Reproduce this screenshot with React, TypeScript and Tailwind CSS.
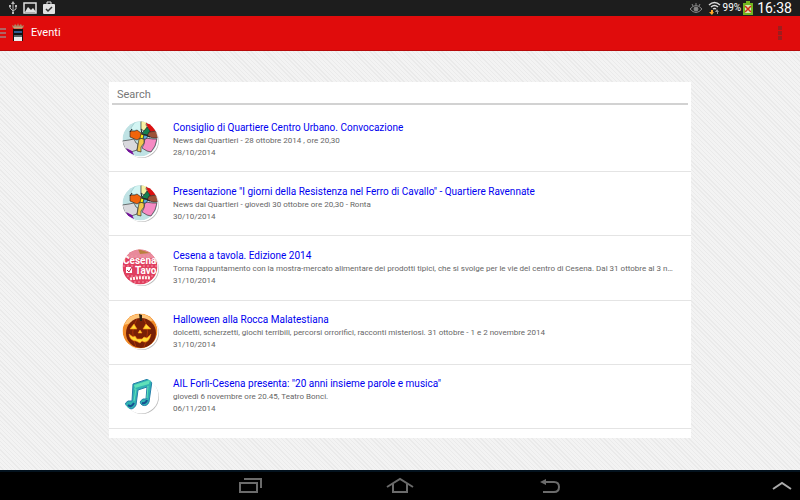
const events = [
  {
    icon: "map",
    title: "Consiglio di Quartiere Centro Urbano. Convocazione",
    description: "News dai Quartieri - 28 ottobre 2014 , ore 20,30",
    date: "28/10/2014",
  },
  {
    icon: "map",
    title: 'Presentazione "I giorni della Resistenza nel Ferro di Cavallo" - Quartiere Ravennate',
    description: "News dai Quartieri - giovedì 30 ottobre ore 20,30 - Ronta",
    date: "30/10/2014",
  },
  {
    icon: "food",
    title: "Cesena a tavola. Edizione 2014",
    description:
      "Torna l'appuntamento con la mostra-mercato alimentare dei prodotti tipici, che si svolge per le vie del centro di Cesena. Dal 31 ottobre al 3 novembre",
    date: "31/10/2014",
  },
  {
    icon: "pumpkin",
    title: "Halloween alla Rocca Malatestiana",
    description:
      "dolcetti, scherzetti, giochi terribili, percorsi orrorifici, racconti misteriosi. 31 ottobre - 1 e 2 novembre 2014",
    date: "31/10/2014",
  },
  {
    icon: "music",
    title: 'AIL Forlì-Cesena presenta: "20 anni insieme parole e musica"',
    description: "giovedì 6 novembre ore 20.45, Teatro Bonci.",
    date: "06/11/2014",
  },
];

const MapArt = () => (
  <g stroke="#222" strokeWidth=".6" strokeLinejoin="round">
    <circle cx="18" cy="18" r="17.5" fill="#bfe2e4" stroke="none" />
    <path d="M9 7 13 1 19 0 19 8 20 11 17 11 14 9 11 10Z" fill="#d3f5f3" stroke="#8fc4c4" />
    <path d="M19 0 25 0 24 4 26 7 22 10 19 8Z" fill="#f8f2a4" />
    <path d="M24 2 31 4 35 10 28 11 26 7Z" fill="#dc1111" stroke="none" />
    <path d="M22 10 25 6 28 10 27 14 23 14 20 12Z" fill="#168050" />
    <path d="M8 10 13 10 15 9 19 12 20 16 15 19 8 16Z" fill="#f0640c" />
    <path d="M27 11 35 10 36 17 31 17 25 15Z" fill="#9c5237" />
    <path d="M0 20 7 19 12 18 14 22 16 23 15 29 9 31 3 28Z" fill="#d9d9dd" />
    <path d="M23 17 31 18 35 18 33 25 29 31 25 30 20 27 22 23Z" fill="#f58bc4" />
    <path d="M17 18 22 17 22 22 19 26 19 31 15 30 16 24Z" fill="#f1c74c" />
    <path d="M19 13 22 14 21 18 18 17Z" fill="#f7ed12" />
    <path d="M22 14 26 15 24 18 21 18Z" fill="#5aaee0" />
    <path d="M4 27 10 30 12 34 6 31Z" fill="#76119b" stroke="none" />
    <path d="M10 8 8 11M19 8 20 13 24 14 28 16" fill="none" strokeWidth="1" />
  </g>
);

const FoodArt = () => (
  <g>
    <circle cx="18" cy="18" r="17.5" fill="#e0405f" />
    <path d="M6 3Q18-4 30 4L33 9 3 9Z" fill="#e88a9b" />
    <path d="M16 0 28 4 18 5Z" fill="#b9803f" />
    <path d="M1 7H35M1 17H35M1 27H35M8 33H29" stroke="#f391a5" strokeWidth="1" strokeDasharray="2 2" />
    <text x="1" y="15" fill="#fff" fontSize="10" fontWeight="700">Cesena</text>
    <text x="13" y="25" fill="#fff" fontSize="10" fontWeight="700">Tavo</text>
    <path d="M4 18h6v6H4z" fill="#fff" />
    <path d="m5 21 2 2 3-5" fill="none" stroke="#b5294b" />
    <path d="M8 30Q18 28 28 29" stroke="#fff3ed" strokeWidth="3" strokeDasharray="2 1" fill="none" />
  </g>
);

const PumpkinArt = () => (
  <g>
    <circle cx="18" cy="18" r="17.5" fill="#f18b28" />
    <path d="M2 12Q7 1 18 1 27 1 31 8L20 7Z" fill="#ffc477" />
    <ellipse cx="19" cy="20" rx="15" ry="15" fill="#782006" />
    <path d="M15 6Q7 18 14 34M22 6Q29 18 22 34" stroke="#a83508" strokeWidth="1" fill="none" />
    <path d="M18 8 17 1 20 2 20 8Z" fill="#2b2011" />
    <g fill="#ffdb36" stroke="#ff8a13" strokeWidth=".6">
      <path d="M12 11 15 16 8 16Z" />
      <path d="M24 11 29 16 21 16Z" />
      <path d="M18 17 20 20 16 20Z" />
      <path d="M7 21 11 24 13 23 15 26 20 26 22 24 25 25 29 21Q27 30 22 29L20 28 18 30 14 28Q8 28 7 21Z" />
    </g>
  </g>
);

const MusicArt = () => (
  <g>
    <circle cx="18" cy="18" r="17.5" fill="#fff" />
    <path
      d="M11 7 29 1 30 4 27 25Q25 30 20 28 16 25 21 22L24 22 25 10 16 13 14 28Q11 34 5 31 1 27 6 24L10 24Z"
      fill="#30b3b2"
      stroke="#267eaa"
      strokeWidth="1"
      strokeLinejoin="round"
    />
    <path d="M12 8 28 3 27 7 13 11Z" fill="#60e0b9" />
    <path d="M12 12 14 12 12 24M26 9 25 21" stroke="#60e0b9" fill="none" />
    <path d="M6 28q3 3 6-2M20 26q4 1 5-3" stroke="#174f92" strokeWidth="2" fill="none" />
  </g>
);

const EventIcon = ({ name }: { name: string }) => (
  <svg viewBox="0 0 38 38" className="size-[38px] shrink-0" aria-hidden="true">
    <defs>
      <clipPath id="disc">
        <circle cx="18" cy="18" r="17.5" />
      </clipPath>
    </defs>
    <circle cx="20" cy="20" r="17" fill="#bbb" />
    <circle cx="19" cy="19" r="17.5" fill="#fff" />
    <g clipPath="url(#disc)">
      {name === "map" && <MapArt />}
      {name === "food" && <FoodArt />}
      {name === "pumpkin" && <PumpkinArt />}
      {name === "music" && <MusicArt />}
    </g>
  </svg>
);

const StatusBar = () => (
  <div className="flex h-4 items-center justify-between bg-[#1d1d1d] px-2 text-white">
    <div className="flex items-center gap-1">
      <svg viewBox="0 0 10 14" className="h-[14px] w-[10px]" fill="none" stroke="#bbb">
        <path d="M5 2v10M2 5v2l3 3 3-2V5" />
        <path d="M5 0 7 3H3ZM4 11h2v2H4ZM1 4h2v2H1ZM7 4h2v2H7Z" fill="#bbb" stroke="none" />
      </svg>
      <svg viewBox="0 0 16 14" className="h-[14px] w-4">
        <path d="M2 2h12v10H2Z" fill="#222" stroke="#e2e2e2" strokeWidth="1.5" />
        <path d="m3 11 3-5 3 3 2-2 3 4Z" fill="#e2e2e2" />
      </svg>
      <svg viewBox="0 0 14 14" className="h-[14px] w-[14px]">
        <path d="M5 3V1h4v2" fill="none" stroke="#e2e2e2" />
        <rect x="1" y="3" width="12" height="10" rx="1" fill="#e2e2e2" />
        <path d="m4 8 2 2 4-4" fill="none" stroke="#333" strokeWidth="1.5" />
      </svg>
    </div>
    <div className="flex items-center">
      <svg viewBox="0 0 14 12" className="mr-[5px] h-3 w-[14px]" fill="none" stroke="#888">
        <path d="M1 7q6-7 12 0-6 7-12 0M3 2l1 2M7 1v2M11 2l-1 2" />
        <circle cx="7" cy="7" r="2" fill="#888" />
      </svg>
      <svg viewBox="0 0 13 14" className="mr-[2px] h-[14px] w-[13px]" fill="none" stroke="#ddd">
        <path d="M1 4q5.5-5 11 0M3 6q3.5-3 7 0M5 8q1.5-1 3 0" strokeWidth="1.5" />
        <path d="M3 9v2H1l3 3 2-3H5V9Z" fill="#ffa729" stroke="none" />
        <path d="M9 13v-2H7l2-3 2 3h-1v2Z" fill="#999" stroke="none" />
      </svg>
      <span className="text-[10px] leading-4">99%</span>
      <svg viewBox="0 0 10 14" className="mr-[4px] ml-[2px] h-[14px] w-[10px]">
        <path d="M0 2h3V0h4v2h3v12H0Z" fill="#72b620" />
        <path d="M2 4h6v8H2Z" fill="#d9e4b0" />
        <path d="m2 5 6 6M8 5l-6 6" stroke="#d42e16" strokeWidth="1.5" />
      </svg>
      <span className="text-[14px] leading-4">16:38</span>
    </div>
  </div>
);

const Header = () => (
  <header className="flex h-[35px] items-center border-b border-[#b70a0a] bg-[#e00c0c] pr-[14px] text-white">
    <button aria-label="Menu" className="flex items-center">
      <svg viewBox="0 0 7 12" className="h-3 w-[7px]" stroke="#b06464" strokeWidth="2">
        <path d="M0 2h6M0 6h6M0 10h6" />
      </svg>
      <svg viewBox="0 0 14 20" className="ml-1 h-5 w-[14px]">
        <path d="M2 5 1 2l2 1 1-2 2 2 1-3 1 3 2-2 1 2 2-1-1 3Z" fill="#ae8664" />
        <path d="M3 5h8" stroke="#d5bd8d" />
        <path d="M2 6h10v12H2Z" fill="#111" />
        <path d="M3 9h8" stroke="#315b91" strokeWidth="2" />
        <path d="M3 14h8v4H3Z" fill="#eee" />
        <path d="M3 13h8" stroke="#9bb3ba" />
      </svg>
    </button>
    <h1 className="ml-[6px] flex-1 text-[11px] leading-4">Eventi</h1>
    <button aria-label="More options">
      <svg viewBox="0 0 12 16" className="h-4 w-3" fill="#9f1d1d">
        <path d="M4 1h4v4H4ZM4 6h4v4H4ZM4 11h4v4H4Z" />
      </svg>
    </button>
  </header>
);

const NavBar = () => (
  <nav className="grid h-[30px] grid-cols-[1fr_150px_150px_150px_1fr] items-center border-t-2 border-[#03121e] bg-black">
    <button aria-label="Recent apps" className="col-start-2 justify-self-center">
      <svg viewBox="0 0 26 18" className="h-[18px] w-[26px]" fill="none" stroke="#6b6b6b" strokeWidth="2">
        <path d="M3 6h17v9H3ZM7 2h17v9" />
      </svg>
    </button>
    <button aria-label="Home" className="justify-self-center">
      <svg viewBox="0 0 28 18" className="h-[18px] w-7" fill="none" stroke="#6b6b6b" strokeWidth="2">
        <path d="M1 10 14 2l13 8M7 7v8h14V7" />
      </svg>
    </button>
    <button aria-label="Back" className="justify-self-center">
      <svg viewBox="0 0 22 18" className="h-[18px] w-[22px]" fill="none" stroke="#6b6b6b" strokeWidth="2">
        <path d="M6 5h9q5 0 5 5t-5 5H4" />
        <path d="M1 5 7 2v6Z" fill="#6b6b6b" stroke="none" />
      </svg>
    </button>
    <button aria-label="Show tray" className="mr-2 justify-self-end">
      <svg viewBox="0 0 20 10" className="h-[10px] w-5" fill="none" stroke="#aaa" strokeWidth="2">
        <path d="m1 8 9-6 9 6" />
      </svg>
    </button>
  </nav>
);

const App = () => {
  return (
    <div className="flex min-h-screen flex-col font-['Roboto',sans-serif]">
      <StatusBar />
      <Header />
      <main className="flex flex-1 flex-col bg-[repeating-linear-gradient(45deg,#f3f3f3_0px,#f3f3f3_2px,#eaeaea_2px,#eaeaea_3px)] px-[109px] pt-[31px] pb-8">
        <section className="flex flex-1 flex-col bg-white pb-[9px]">
          <div className="px-[3px]">
            <input
              type="search"
              aria-label="Search"
              placeholder="Search"
              className="block h-[23px] w-full border-b-2 border-[#d2d2d2] px-[5px] pt-1 text-[11px] leading-4 outline-none placeholder:text-[#777]"
            />
          </div>
          <ul className="flex flex-1 flex-col pt-[3px]">
            {events.map((event) => (
              <li
                key={event.title}
                className="flex flex-1 items-center gap-[13px] border-b border-[#e4e4e4] pr-[15px] pl-[13px]"
              >
                <EventIcon name={event.icon} />
                <div className="min-w-0 flex-1">
                  <a href="#" className="block truncate text-[10px] leading-[14px] text-[#0000f0]">
                    {event.title}
                  </a>
                  <p className="truncate text-[8px] leading-3 text-[#666]">{event.description}</p>
                  <p className="text-[8px] leading-3 text-[#666]">{event.date}</p>
                </div>
              </li>
            ))}
          </ul>
        </section>
      </main>
      <NavBar />
    </div>
  );
};

export default App;
